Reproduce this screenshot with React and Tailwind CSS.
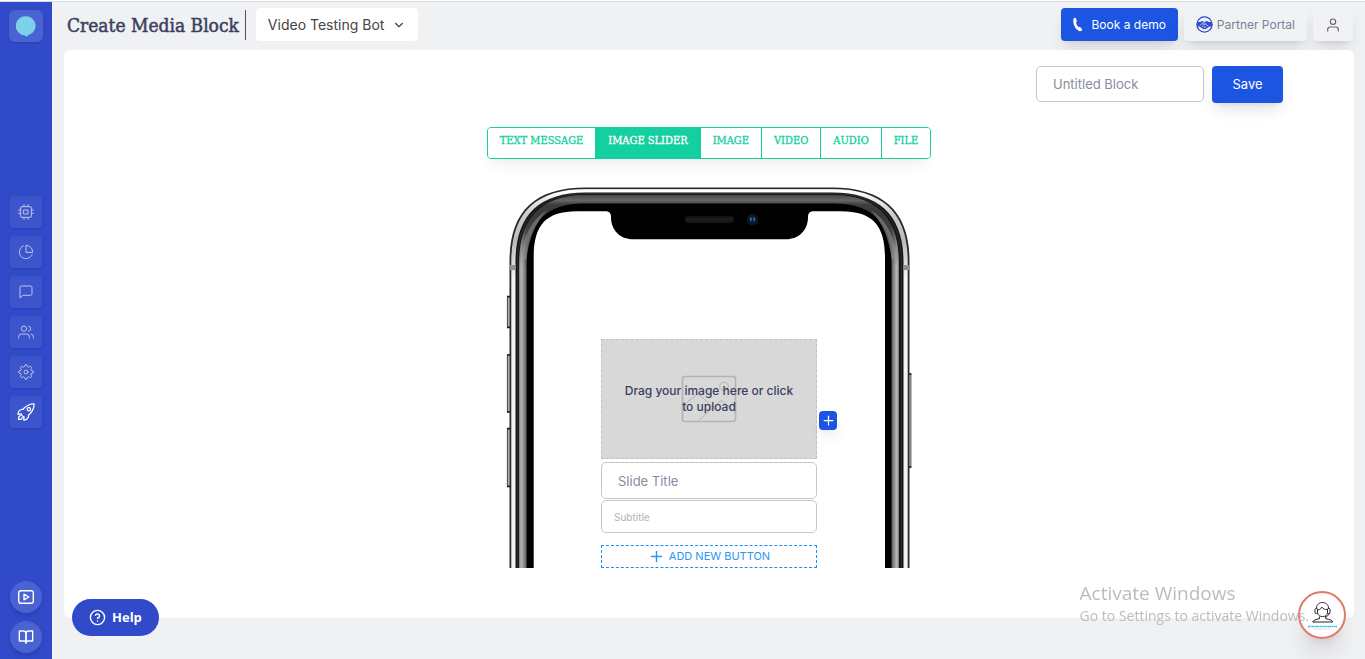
import React, { useState } from 'react';
import {
    FiBookOpen,
    FiChevronDown,
    FiCpu,
    FiHelpCircle,
    FiMessageSquare,
    FiPieChart,
    FiPlus,
    FiSettings,
    FiUser,
    FiUsers,
} from 'react-icons/fi';
import { IoRocketOutline } from 'react-icons/io5';

const navItems = [
    { label: 'Bots', icon: FiCpu },
    { label: 'Analytics', icon: FiPieChart },
    { label: 'Chats', icon: FiMessageSquare },
    { label: 'Users', icon: FiUsers },
    { label: 'Settings', icon: FiSettings },
];

const tabs = ['TEXT MESSAGE', 'IMAGE SLIDER', 'IMAGE', 'VIDEO', 'AUDIO', 'FILE'];

const PlayIcon = () => (
    <svg width="16" height="14" viewBox="0 0 16 14" fill="none" stroke="currentColor" strokeWidth="1.4" strokeLinejoin="round">
        <rect x="0.7" y="0.7" width="14.6" height="12.6" rx="2.2" />
        <path d="M6 4.2v5.6L10.8 7z" />
    </svg>
);

// Slim handset, leaning to the right
const PhoneIcon = () => (
    <svg width="10" height="15" viewBox="0 0 10 15" fill="currentColor">
        <path d="M1.300 1C2 .6 2.700.7 3 1.400L3.800 3.600C4 4.300 3.700 4.900 3.100 5.100 3 7.100 4.300 9.300 5.900 10.200 6.400 9.800 7.100 9.900 7.600 10.400L8.900 11.900C9.400 12.500 9.300 13.200 8.700 13.600 7.700 14.300 6.500 14.300 5.400 13.600 2.200 11.600.2 7.600.3 3.200.3 2.200.6 1.400 1.300 1z" />
    </svg>
);

const PartnerIcon = () => (
    <svg width="17" height="17" viewBox="0 0 17 17" fill="none" stroke="#304bcb">
        <circle cx="8.5" cy="8.5" r="7.6" strokeWidth="1.300" />
        <path d="M1 6h3.200l1.800-.9 2.500.8 2.500-.8 1.800.9H16v4.600h-2.400l-3.400 2.200-1.700.5-1.700-.5-3.400-2.200H1z" fill="#304bcb" stroke="none" />
        <path d="M4 9.500l2.600-2.600 2 .2 3.600 3M6.600 8.700l1.300.5 1-1.300M6 11l1-1M8 11.800l1-1M10 11.500l-1.500-1.500" stroke="#ffffff" strokeWidth=".7" />
    </svg>
);

const AgentIcon = () => (
    <svg width="42" height="42" viewBox="0 0 42 42" fill="none">
        <path d="M15.500 14.500c-.5-8 12.500-8 12 0M16.500 16c2.500 0 3.700-1.500 4.300-3 1.200 2.200 3.500 2.500 5.700 2.500v3c0 5.500-9.500 5.500-10 0z" stroke="#333" strokeWidth="1" />
        <rect x="14" y="14.500" width="2.500" height="5" rx="1" stroke="#222" strokeWidth="1" />
        <rect x="26.500" y="14.500" width="2.500" height="5" rx="1" stroke="#222" strokeWidth="1" />
        <path d="M28 19.500c0 2-2 3-4 3M18.500 22.500v2.200c-4 .8-6 1.400-6.800 3.300h20c-.7-1.900-2.700-2.500-7-3.300v-2.200" stroke="#222" strokeWidth="1" />
        <path d="M7 32.500h29" stroke="#36bfe0" strokeWidth="1.600" strokeDasharray="2 .5 1 .4" />
        <path d="M14 35h15" stroke="#bbb" strokeWidth=".7" strokeDasharray="1 .6" />
    </svg>
);

// Top part of the handset, cut off where the preview ends
const PhoneFrame = () => (
    <svg width="406" height="381" viewBox="0 0 406 381" fill="none" className="col-start-1 row-start-1">
        <defs>
            <linearGradient id="bezelSide" gradientUnits="userSpaceOnUse" x1="13" x2="393" y1="0" y2="0">
                <stop offset="0" stopColor="#7c7c7c" />
                <stop offset=".006" stopColor="#b8b8b8" />
                <stop offset=".013" stopColor="#8c8c8c" />
                <stop offset=".021" stopColor="#505050" />
                <stop offset=".979" stopColor="#505050" />
                <stop offset=".987" stopColor="#8c8c8c" />
                <stop offset=".994" stopColor="#b8b8b8" />
                <stop offset="1" stopColor="#7c7c7c" />
            </linearGradient>
            <linearGradient id="bezelTop" gradientUnits="userSpaceOnUse" x1="0" x2="0" y1="6" y2="80">
                <stop offset="0" stopColor="#3a3a3a" />
                <stop offset=".1" stopColor="#666" />
                <stop offset=".16" stopColor="#3d3d3d" />
                <stop offset=".3" stopColor="#333" stopOpacity=".8" />
                <stop offset="1" stopColor="#333" stopOpacity="0" />
            </linearGradient>
            <linearGradient id="steel" gradientUnits="userSpaceOnUse" x1="0" x2="0" y1="0" y2="90">
                <stop offset="0" stopColor="#999" />
                <stop offset=".04" stopColor="#fff" />
                <stop offset=".3" stopColor="#ccc" />
                <stop offset=".6" stopColor="#bbb" />
                <stop offset="1" stopColor="#f4f2f3" />
            </linearGradient>
            <linearGradient id="key" x1="0" x2="1" y1="0" y2="0">
                <stop offset="0" stopColor="#444" />
                <stop offset=".5" stopColor="#ddd" />
                <stop offset="1" stopColor="#999" />
            </linearGradient>
        </defs>
        <g fill="url(#key)" stroke="#222" strokeWidth=".6">
            <rect x="1.300" y="110" width="3.500" height="30" rx=".8" />
            <rect x="1.300" y="168" width="3.500" height="57" rx=".8" />
            <rect x="1.300" y="242" width="3.500" height="57" rx=".8" />
            <rect x="401.500" y="187" width="3.500" height="93" rx=".8" />
        </g>
        <path d="M1 109.500h3.500M1 140.500h3.500M1 168h3.500M1 225h3.500M1 241.500h3.500M1 299.500h3.500M401.500 187h4M401.500 280h4" stroke="#111" strokeWidth="1.500" />
        <path d="M3.500 381V74C3.500 26 27 .5 80 .5H326C379 .5 403.500 26 403.500 74V381Z" fill="#2a2a2a" />
        <path d="M5.300 381V74C5.300 27 28.500 2 80 2H326C377.500 2 401.700 27 401.700 74V381Z" fill="url(#steel)" />
        <path d="M9.500 381V75C9.500 30 31 5.500 80 5.500H326C375 5.500 397.500 30 397.500 75V381Z" fill="#171717" />
        <path d="M11.500 381V76C11.500 32 32 6.500 80 6.500H326C374 6.500 395.500 32 395.500 76V381" stroke="#3a3a3a" strokeWidth=".6" />
        <path d="M13 381V77C13 33 34 8 80 8H326C372 8 393 33 393 77V381Z" fill="url(#bezelSide)" />
        <path d="M13 381V77C13 33 34 8 80 8H326C372 8 393 33 393 77V381Z" fill="url(#bezelTop)" />
        <path d="M20.700 381V76C20.700 36 40 16.500 78 16.500H328C366 16.500 385.500 36 385.500 76V381Z" fill="#000" />
        <path d="M15 74C16 50 27 31 41 23.500 31 34 23 50 20.500 72M391 74C390 50 379 31 365 23.500 375 34 383 50 385.500 72" fill="#999" fillOpacity=".5" />
        <path d="M27.700 381V70C27.700 38 40 24.300 71 24.300H99C103 24.300 105 26 105 30 105 43 114 52.300 127 52.300H280C293 52.300 302 43 302 30 302 26 304 24.300 308 24.300H335C366 24.300 379 38 379 70V381Z" fill="#fff" />
        <rect x="179" y="29.300" width="49" height="6.600" rx="3.300" fill="#161616" />
        <path d="M181 32.600h45" stroke="#202020" strokeWidth="3" strokeDasharray="1 1" />
        <circle cx="246.500" cy="32.600" r="5.800" fill="#10141d" />
        <circle cx="246.500" cy="32.600" r="3.500" fill="#0a1c3a" />
        <path d="M244.800 30.500v3.500M248.200 30.500v3.500" stroke="#2f78c4" strokeWidth="1.500" />
        <path d="M3.500 80.500h6M397.500 80.500h6" stroke="#8d9196" strokeWidth="5" />
    </svg>
);

const PictureIcon = () => (
    <svg width="56" height="48" viewBox="0 0 56 48" fill="none" stroke="#b3b3b3" className="col-start-1 row-start-1">
        <rect x="1.500" y="1.500" width="53" height="45" rx="2.500" strokeWidth="1.600" />
        <circle cx="43" cy="11.500" r="4.300" />
        <path d="M1.500 31 17 18.500 34 34M16.500 46.500 40 25.500 54.500 37" />
    </svg>
);

const Sidebar = () => (
    <aside className="flex w-13 shrink-0 flex-col items-center justify-between bg-[#304aca] pt-2 pb-1.5">
        <a href="#home" aria-label="Home" className="flex h-8 w-[34px] items-center justify-center rounded-md bg-[#4a62d2] shadow-sm">
            <svg width="20" height="21" viewBox="0 0 20 21">
                <path d="M10 .3a9.700 9.500 0 0 1 3 18.500L10.300 20.700 9 19.400A9.700 9.500 0 0 1 10 .3z" fill="#7dd1e8" />
            </svg>
        </a>
        <nav className="flex flex-col gap-2">
            {navItems.map(({ label, icon: Icon }) => (
                <a key={label} href="#nav" aria-label={label} className="flex size-8 items-center justify-center rounded bg-[#3c55cd] text-[#c0c5e6] shadow-sm">
                    <Icon size={16} strokeWidth={1.5} />
                </a>
            ))}
            <a href="#nav" aria-label="Launch" className="flex size-8 items-center justify-center rounded bg-[#3c55cd] text-white shadow-sm">
                <IoRocketOutline size={20} />
            </a>
        </nav>
        <div className="flex flex-col gap-2">
            <a href="#videos" aria-label="Videos" className="flex size-8 items-center justify-center rounded-full bg-[#4a62d2] text-white shadow-md">
                <PlayIcon />
            </a>
            <a href="#docs" aria-label="Docs" className="flex size-8 items-center justify-center rounded-full bg-[#4a62d2] text-white shadow-md">
                <FiBookOpen size={16} />
            </a>
        </div>
    </aside>
);

const Header = () => (
    <header className="flex items-center justify-between pt-1.5 pr-3 pb-[9px] pl-[15px]">
        <div className="flex items-center">
            <h1 className="border-r border-[#5a4a55] pr-1.5 font-['DejaVu_Serif_Condensed','DejaVu_Serif',serif] text-[19px] leading-[30px] font-normal text-[#3b4060] [-webkit-text-stroke:0.5px_#3b4060]">
                Create Media Block
            </h1>
            <button type="button" className="ml-2.5 flex h-[33px] items-center gap-2 rounded bg-white px-3 text-[14px] text-[#444]">
                Video Testing Bot
                <FiChevronDown size={14} />
            </button>
        </div>
        <div className="flex gap-1.5">
            <button type="button" className="flex h-[33px] items-center gap-2 rounded-sm bg-[#1b55e2] px-3 text-[12px] text-white shadow-lg shadow-black/10">
                <PhoneIcon />
                Book a demo
            </button>
            <button type="button" className="flex h-[33px] items-center gap-1 rounded-sm bg-[#f1f2f4] px-3 text-[12px] text-[#7d8096] shadow-lg shadow-black/10">
                <PartnerIcon />
                Partner Portal
            </button>
            <button type="button" aria-label="Account" className="flex h-[33px] w-10 items-center justify-center rounded-sm bg-[#f1f2f4] text-[#6a6478] shadow-lg shadow-black/10">
                <FiUser size={16} strokeWidth={1.8} />
            </button>
        </div>
    </header>
);

const SlideEditor = () => (
    <div className="col-start-1 row-start-1 grid grid-cols-[1fr_216px_1fr] gap-x-0.5 self-end">
        <div className="col-start-2">
            <button type="button" className="grid h-30 w-full place-items-center border border-dashed border-[#c2c2c2] bg-[#d8d8d8]">
                <PictureIcon />
                <span className="col-start-1 row-start-1 px-4 text-[12px] leading-4 font-medium text-[#3b3f5c]">
                    Drag your image here or click to upload
                </span>
            </button>
            <input
                type="text"
                aria-label="Slide Title"
                placeholder="Slide Title"
                className="mt-[3px] block h-[37px] w-full rounded-[5px] border border-[#bfc9d4] bg-white px-4 text-[13px] placeholder:text-[#888c9c]"
            />
            <input
                type="text"
                aria-label="Subtitle"
                placeholder="Subtitle"
                className="mt-px block h-[33px] w-full rounded-[5px] border border-[#bfc9d4] bg-white px-3 text-[10px] placeholder:text-[#b3b3b8]"
            />
            <button type="button" className="mt-3 flex h-[23px] w-full items-center justify-center gap-1 border border-dashed border-[#1a8cff] pb-px text-[11px] text-[#2a96f5]">
                <FiPlus size={17} />
                ADD NEW BUTTON
            </button>
        </div>
        <button type="button" aria-label="Add slide" className="mt-[72px] flex h-[19px] w-[18px] items-center justify-center rounded bg-[#1b55e2] text-white shadow-lg shadow-black/10">
            <FiPlus size={15} />
        </button>
    </div>
);

const App = () => {
    const [activeTab, setActiveTab] = useState('IMAGE SLIDER');

    return (
        <div className="flex min-h-screen flex-col border-t border-white bg-[#f0f1f3] font-['Inter','Open_Sans',sans-serif]">
            <div className="border-t border-[#d8dcdf]" />
            <div className="flex flex-1">
                <Sidebar />
                <div className="flex min-w-0 flex-1 flex-col">
                    <Header />
                    <main className="mr-[11px] mb-[41px] ml-3 flex flex-1 flex-col items-center rounded-md bg-white pt-4">
                        <form className="flex gap-2 self-end pr-[71px]">
                            <input
                                type="text"
                                aria-label="Block name"
                                placeholder="Untitled Block"
                                className="h-9 w-42 rounded-[5px] border border-[#bfc9d4] px-4 text-[13px] placeholder:text-[#888c9c]"
                            />
                            <button type="button" className="h-[37px] w-[71px] rounded bg-[#1b55e2] text-[13px] text-white shadow-lg shadow-black/10">
                                Save
                            </button>
                        </form>

                        {/* Block type tabs */}
                        <div className="mt-6 flex overflow-hidden rounded border border-[#14cfa0] shadow-lg shadow-black/5">
                            {tabs.map((tab) => (
                                <button
                                    key={tab}
                                    type="button"
                                    onClick={() => setActiveTab(tab)}
                                    className={`h-[30px] border-r border-[#14cfa0] px-3 pb-1 font-['DejaVu_Serif_Condensed','DejaVu_Serif',serif] text-[11px] [-webkit-text-stroke:0.3px_currentColor] last:border-r-0 ${
                                        activeTab === tab ? 'bg-[#14cfa0] text-white' : 'bg-white text-[#14cfa0]'
                                    }`}
                                >
                                    {tab}
                                </button>
                            ))}
                        </div>

                        {/* Phone preview */}
                        <div className="mt-7 grid">
                            <PhoneFrame />
                            <SlideEditor />
                        </div>
                    </main>
                </div>
            </div>

            <button type="button" className="fixed bottom-[23px] left-18 flex h-[37px] items-center gap-1.5 rounded-full bg-[#304aca] px-[17px] font-['Open_Sans',sans-serif] text-[13px] font-bold text-white">
                <FiHelpCircle size={17} />
                Help
            </button>

            <button type="button" aria-label="Support" className="fixed right-[19px] bottom-5 flex size-12 items-center justify-center rounded-full border-2 border-[#e07a68] bg-white/90 shadow-xl shadow-black/10">
                <AgentIcon />
            </button>
            <div className="pointer-events-none fixed right-14 bottom-[33px] font-['Open_Sans',sans-serif] text-[#bbbcbe]">
                <p className="text-[19px] leading-[26px]">Activate Windows</p>
                <p className="text-[14px] leading-5">Go to Settings to activate Windows.</p>
            </div>
        </div>
    );
};

export default App;
